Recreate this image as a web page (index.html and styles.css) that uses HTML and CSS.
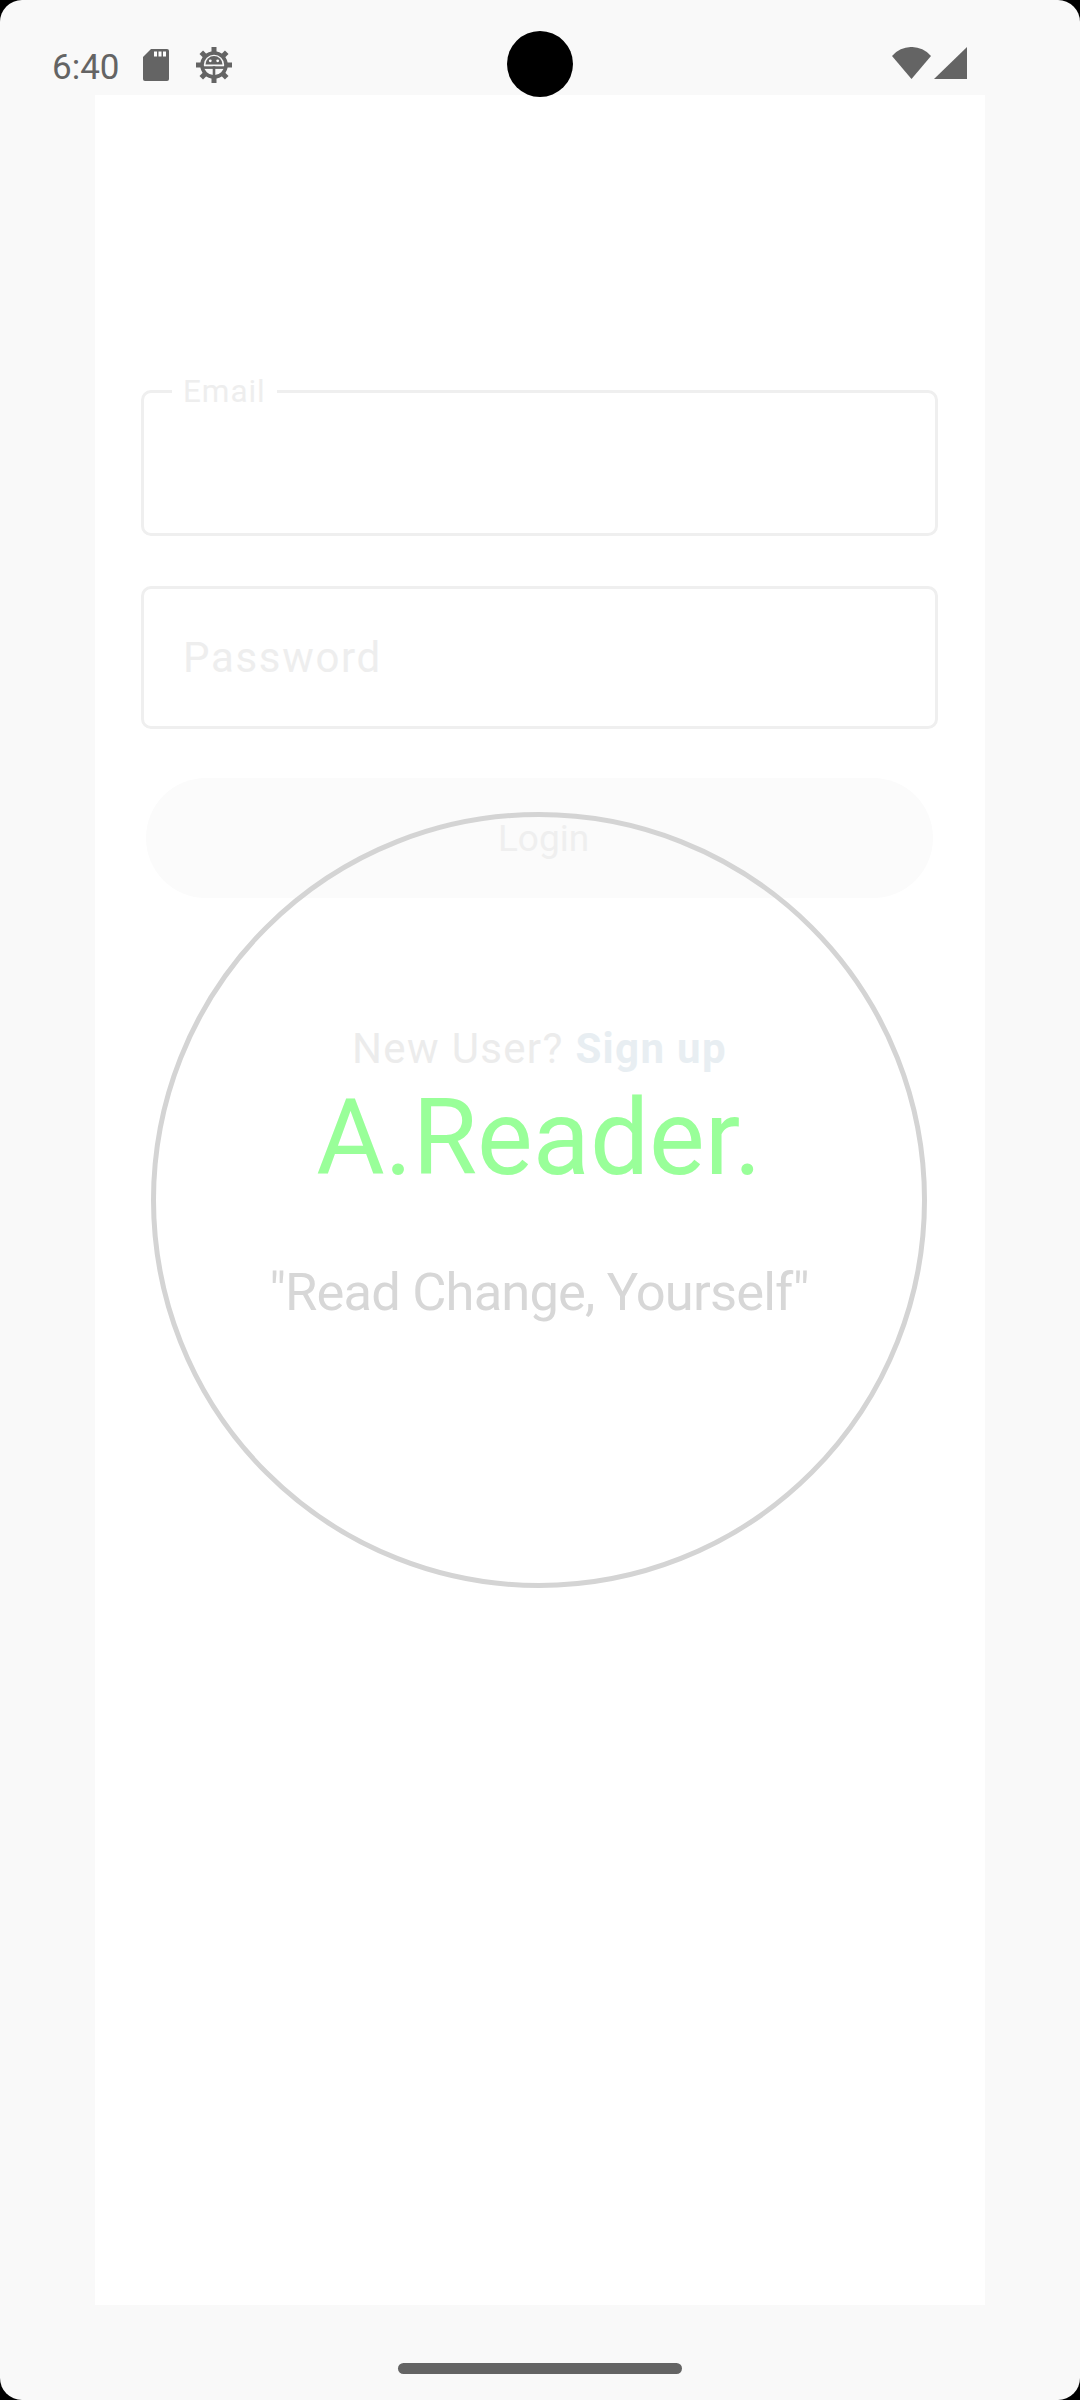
FILE: index.html
```html
<!DOCTYPE html>
<html lang="en">
<head>
<meta charset="utf-8">
<title>A.Reader Login</title>
<link rel="stylesheet" href="styles.css">
</head>
<body>
<div class="screen">
  <header class="status">
    <span class="time">6:40</span>
    <svg class="ic-sd" width="26" height="32" viewBox="0 0 26 32">
      <path d="M8 0H24a2 2 0 0 1 2 2V30a2 2 0 0 1-2 2H2a2 2 0 0 1-2-2V8Z" fill="#646464"/>
      <rect x="11" y="2.5" width="3" height="5" fill="#fff"/>
      <rect x="15.5" y="2.5" width="3" height="5" fill="#fff"/>
      <rect x="20" y="2.5" width="3" height="5" fill="#fff"/>
    </svg>
    <svg class="ic-gear" width="36" height="36" viewBox="0 0 36 36">
      <g fill="#646464">
        <rect x="15.5" y="0" width="5" height="6"/>
        <rect x="15.5" y="30" width="5" height="6"/>
        <rect x="0" y="15.5" width="6" height="5"/>
        <rect x="30" y="15.5" width="6" height="5"/>
        <rect x="15.5" y="0" width="5" height="6" transform="rotate(45 18 18)"/>
        <rect x="15.5" y="0" width="5" height="6" transform="rotate(135 18 18)"/>
        <rect x="15.5" y="0" width="5" height="6" transform="rotate(225 18 18)"/>
        <rect x="15.5" y="0" width="5" height="6" transform="rotate(315 18 18)"/>
      </g>
      <circle cx="18" cy="18" r="12" fill="none" stroke="#646464" stroke-width="3.6"/>
      <path d="M9.5 17.5A8.5 8.5 0 0 1 26.5 17.5Z" fill="#646464"/>
      <circle cx="14.3" cy="13.8" r="1.4" fill="#fff"/>
      <circle cx="21.7" cy="13.8" r="1.4" fill="#fff"/>
      <rect x="8" y="19.3" width="20" height="2.6" fill="#646464"/>
      <rect x="16.7" y="19.3" width="2.6" height="10" fill="#646464"/>
    </svg>
    <span class="spacer"></span>
    <svg class="ic-wifi" width="39" height="32" viewBox="0 0 39 32">
      <path d="M0 9A25.6 25.6 0 0 1 39 9L19.5 32Z" fill="#646464"/>
    </svg>
    <svg class="ic-signal" width="33" height="32" viewBox="0 0 33 32">
      <path d="M0 32L33 0V32Z" fill="#646464"/>
    </svg>
    <span class="camera"></span>
  </header>

  <main class="content">
    <form class="login">
      <fieldset class="field field-email">
        <legend class="field-label">Email</legend>
        <input class="field-input" type="email" aria-label="Email">
      </fieldset>
      <div class="field field-password">
        <input class="field-input" type="password" placeholder="Password">
      </div>
      <button class="btn-login" type="button">Login</button>
      <p class="signup">New User? <b class="signup-link">Sign up</b></p>
    </form>
  </main>

  <nav class="navbar"><span class="pill"></span></nav>

  <div class="splash">
    <div class="brand">A.Reader.</div>
    <div class="tagline">"Read Change, Yourself"</div>
  </div>
</div>
</body>
</html>
```

FILE: styles.css
```css
html {
  background: #000;
}
body {
  margin: 0;
  font-family: Roboto, "Noto Sans", "Liberation Sans", sans-serif;
}
.screen {
  position: relative;
  width: 1080px;
  height: 2400px;
  background: #f9f9f9;
  border-radius: 22px;
  overflow: hidden;
  display: flex;
  flex-direction: column;
}

/* status bar */
.status {
  position: relative;
  height: 95px;
  flex: none;
  display: flex;
  align-items: flex-start;
  padding: 0 113px 0 52px;
  box-sizing: border-box;
}
.time {
  margin-top: 47px;
  font-size: 35px;
  line-height: 41px;
  color: #646464;
}
.ic-sd {
  margin: 49px 0 0 23px;
}
.ic-gear {
  margin: 47px 0 0 27px;
}
.spacer {
  flex: 1;
}
.ic-wifi {
  margin-top: 47px;
}
.ic-signal {
  margin: 47px 0 0 3px;
}
.camera {
  position: absolute;
  left: 507px;
  top: 31px;
  width: 66px;
  height: 66px;
  border-radius: 50%;
  background: #000;
}

/* content */
.content {
  flex: none;
  height: 2210px;
  margin: 0 95px;
  background: #fff;
}
.login {
  padding: 278px 47px 0 46px;
  display: flex;
  flex-direction: column;
}
.field {
  box-sizing: border-box;
  margin: 0;
  padding: 0;
  border: 3px solid #efefef;
  border-radius: 10px;
  min-width: 0;
}
.field-email {
  height: 163px;
  display: flex;
}
.field-label {
  margin-left: 28px;
  padding: 0 11px;
  font-size: 31.5px;
  line-height: 37px;
  letter-spacing: 0.03em;
  color: #eeeeee;
}
.field-password {
  height: 143px;
  margin-top: 50px;
  display: flex;
}
.field-input {
  flex: 1;
  min-width: 0;
  border: none;
  outline: none;
  background: transparent;
  padding: 0 39px;
  font-family: inherit;
  font-size: 42px;
  letter-spacing: 0.04em;
  color: #333;
}
.field-input::placeholder {
  color: #eeeeee;
}
.btn-login {
  margin: 49px 5px 0;
  height: 120px;
  border: none;
  border-radius: 60px;
  background: #fbfbfb;
  font-family: inherit;
  font-size: 37px;
  font-weight: 400;
  color: #efefef;
  padding: 0 0 0 8px;
}
.signup {
  margin: 126px 0 0;
  text-align: center;
  font-size: 42px;
  line-height: 49px;
  letter-spacing: 0.032em;
  color: #ececec;
}
.signup-link {
  font-weight: 700;
  color: #e8eef2;
}

/* nav bar */
.navbar {
  flex: 1;
  display: flex;
  justify-content: center;
}
.pill {
  margin-top: 58px;
  width: 284px;
  height: 11px;
  border-radius: 6px;
  background: #646464;
}

/* splash circle overlay */
.splash {
  position: absolute;
  left: 151px;
  top: 812px;
  width: 776px;
  height: 776px;
  box-sizing: border-box;
  border: 5px solid #d4d4d4;
  border-radius: 50%;
  display: flex;
  flex-direction: column;
  align-items: center;
  justify-content: center;
  gap: 61px;
}
.brand {
  font-size: 105px;
  line-height: 123px;
  color: #99ff99;
}
.tagline {
  font-size: 52.5px;
  line-height: 62px;
  letter-spacing: -0.85px;
  color: #d7d7d7;
}
```
